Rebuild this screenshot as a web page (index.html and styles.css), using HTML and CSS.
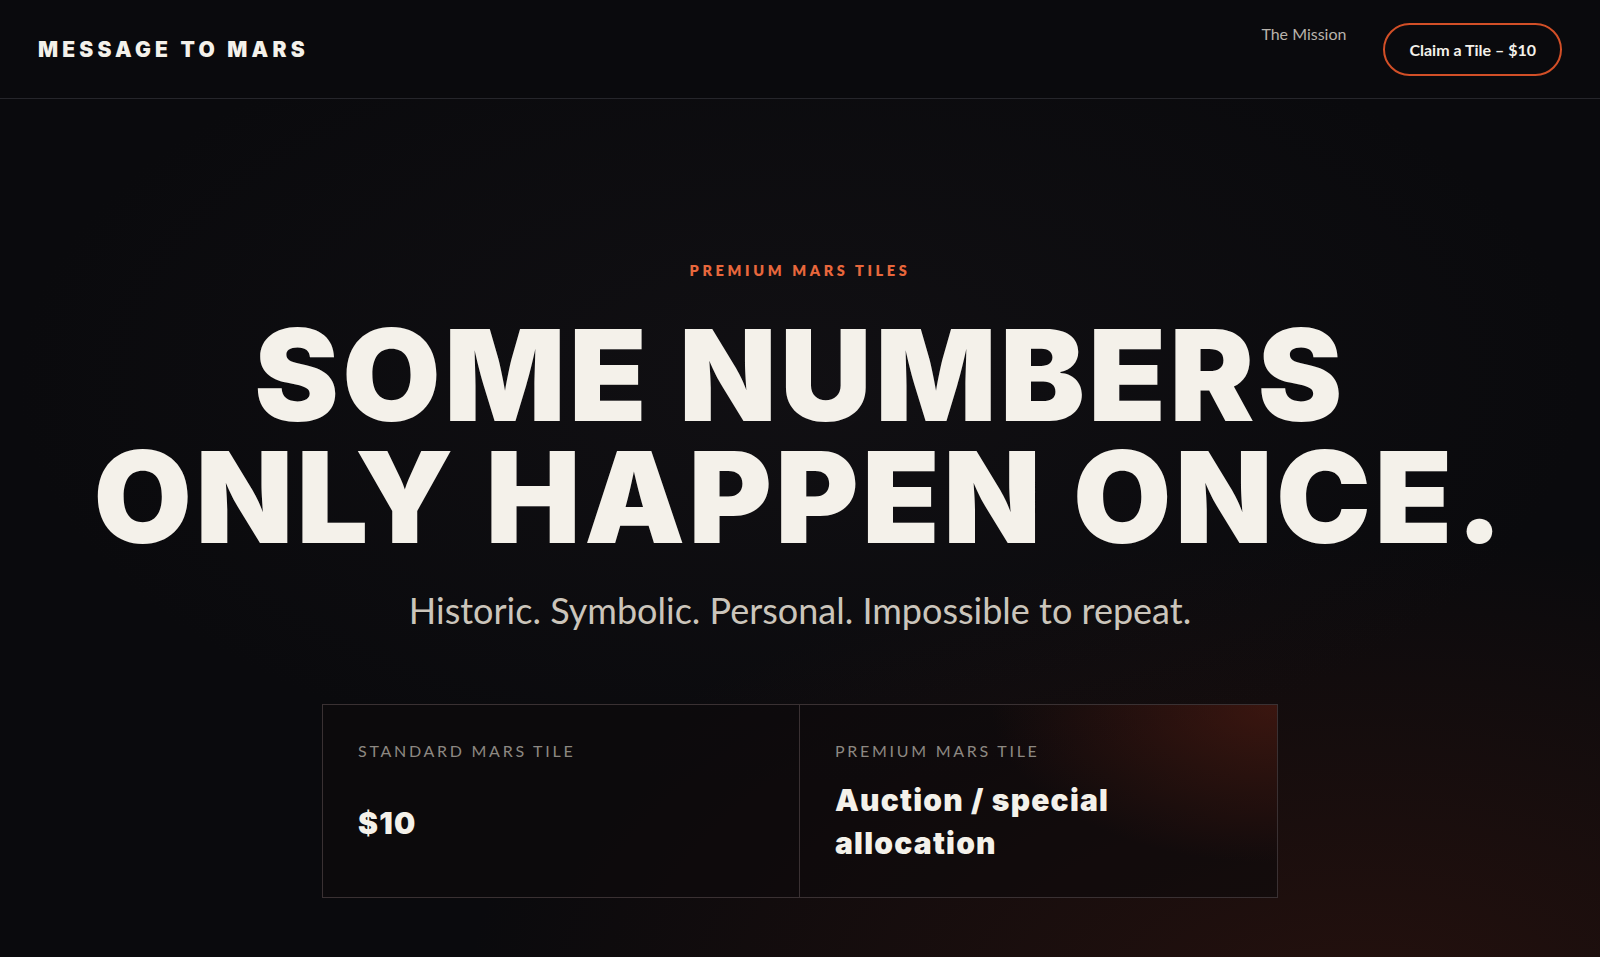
FILE: index.html
```html
<!DOCTYPE html>
<html lang="en">
<head>
    <meta charset="UTF-8">
    <meta name="viewport" content="width=device-width, initial-scale=1.0">
    <title>Message to Mars</title>
    <link rel="stylesheet" href="styles.css">
</head>
<body>
    <header class="site-header">
        <a class="logo" href="#">Message to Mars</a>
        <nav class="nav">
            <a class="nav-link" href="#mission">The Mission</a>
            <a class="claim-btn" href="#claim">Claim a Tile – $10</a>
        </nav>
    </header>

    <main class="hero">
        <div class="eyebrow">Premium Mars Tiles</div>
        <h1 class="headline">
            <span class="line">Some numbers</span>
            <span class="line">only happen once.</span>
        </h1>
        <p class="subtitle">Historic. Symbolic. Personal. Impossible to repeat.</p>

        <div class="tiles">
            <div class="tile standard">
                <div class="tile-label">Standard Mars Tile</div>
                <div class="tile-value">$10</div>
            </div>
            <div class="tile premium">
                <div class="tile-label">Premium Mars Tile</div>
                <div class="tile-value">Auction / special allocation</div>
            </div>
        </div>
    </main>
</body>
</html>
```

FILE: styles.css
```css
* {
    margin: 0;
    padding: 0;
    box-sizing: border-box;
}

body {
    min-height: 100vh;
    font-family: 'Lato', 'Open Sans', sans-serif;
    color: #f4f1ea;
    background-color: #0a0a0d;
    background-image:
        radial-gradient(ellipse 70% 60% at 50% 40%, rgba(30, 26, 30, 0.35), transparent 70%),
        radial-gradient(ellipse 80% 70% at 85% 105%, rgba(58, 22, 14, 0.55), transparent 70%);
}

a {
    text-decoration: none;
    color: inherit;
}

/* Header */
.site-header {
    display: flex;
    justify-content: space-between;
    align-items: center;
    height: 99px;
    padding: 0 38px;
    border-bottom: 1px solid #26262b;
    background-color: #0a0a0d;
}

.logo {
    font-family: 'Inter', 'Liberation Sans', sans-serif;
    font-weight: 900;
    font-size: 21px;
    letter-spacing: 0.2em;
    text-transform: uppercase;
    color: #f4f1ea;
}

.nav {
    display: flex;
    align-items: flex-start;
    gap: 37px;
    align-self: flex-start;
    padding-top: 23px;
}

.nav-link {
    font-size: 16px;
    line-height: 22px;
    color: #b8b3ab;
}

.claim-btn {
    display: inline-flex;
    align-items: center;
    height: 53px;
    padding: 0 24px;
    border: 2px solid #d24f27;
    border-radius: 999px;
    font-size: 16px;
    font-weight: 700;
    color: #f4f1ea;
}

/* Hero */
.hero {
    text-align: center;
    padding-top: 162px;
}

.eyebrow {
    font-size: 14.5px;
    line-height: 20px;
    font-weight: 800;
    letter-spacing: 0.25em;
    text-transform: uppercase;
    color: #e8673c;
}

.headline {
    margin-top: 33px;
    font-family: 'Inter', 'Liberation Sans', sans-serif;
    font-weight: 900;
    font-size: 127px;
    letter-spacing: 3.4px;
    text-transform: uppercase;
    color: #f4f1ea;
}

.headline .line {
    display: block;
    height: 122px;
    line-height: 122px;
}

.subtitle {
    margin-top: 30px;
    font-size: 36px;
    line-height: 44px;
    color: #cbc5bb;
}

.tiles {
    display: grid;
    grid-template-columns: 1fr 1fr;
    width: 956px;
    margin: 72px auto 0;
    border: 1px solid #3a3133;
    text-align: left;
}

.tile {
    padding: 36px 35px 32px;
    background-color: rgba(14, 10, 11, 0.6);
}

.tile.standard {
    border-right: 1px solid #3a3133;
}

.tile.premium {
    background-image: radial-gradient(ellipse 80% 110% at 100% 0%, rgba(112, 36, 20, 0.45), transparent 75%);
}

.tile-label {
    font-size: 16px;
    line-height: 20px;
    letter-spacing: 0.17em;
    text-transform: uppercase;
    color: #8d8882;
}

.tile-value {
    margin-top: 18px;
    max-width: 320px;
    font-family: 'Inter', 'Liberation Sans', sans-serif;
    font-weight: 900;
    font-size: 30px;
    line-height: 43px;
    letter-spacing: 1.2px;
    color: #f4f1ea;
}

.tile.standard .tile-value {
    margin-top: 41px;
}
```
